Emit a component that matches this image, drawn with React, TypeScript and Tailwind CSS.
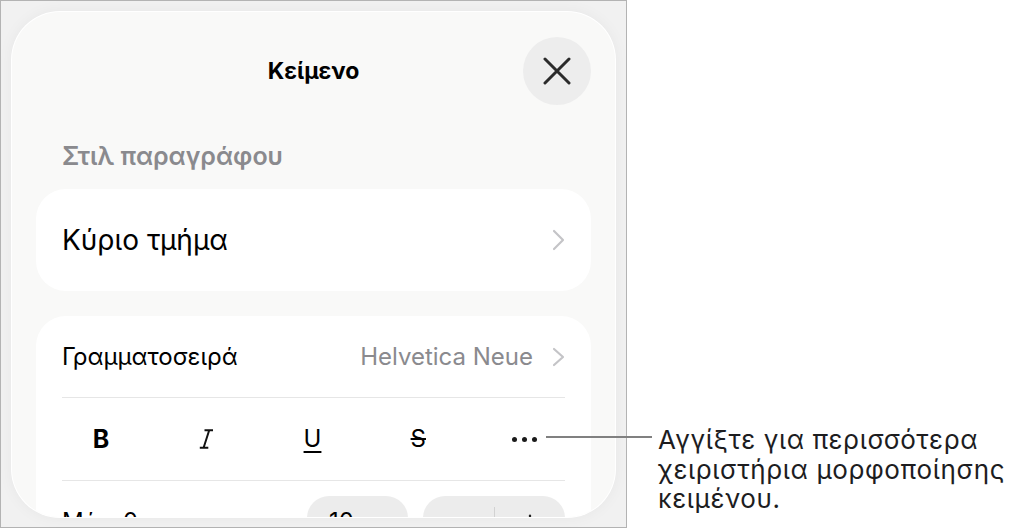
import { Minus, Plus } from "lucide-react"

const font = "font-['Inter','Noto_Sans',sans-serif]"

function Chevron({ h = 22 }: { h?: number }) {
  return (
    <svg width="13" height={h} viewBox={`0 0 13 ${h}`} fill="none" className="shrink-0">
      <polyline
        points={`2,2 11,${h / 2} 2,${h - 2}`}
        stroke="#c4c4c7"
        strokeWidth="2.2"
        strokeLinecap="round"
        strokeLinejoin="round"
      />
    </svg>
  )
}

function CloseButton() {
  return (
    <button className="w-[68px] h-[68px] rounded-full bg-[#ededed] flex items-center justify-center">
      <svg width="28" height="28" viewBox="0 0 28 28" fill="none">
        <path d="M2 2L26 26M26 2L2 26" stroke="#2b2b2b" strokeWidth="3" strokeLinecap="round" />
      </svg>
    </button>
  )
}

function StyleToolbar() {
  return (
    <div className="grid grid-cols-5 h-[82px] pl-[12px] pr-[14px] items-center text-black">
      <div className="flex justify-center">
        <span className="text-[25px] font-bold leading-none">B</span>
      </div>
      <div className="flex justify-center">
        <svg width="15" height="20" viewBox="0 0 15 20" fill="none">
          <path d="M5.5 1.2H14M0.8 18.8H9.3M10.2 1.2L4.6 18.8" stroke="#111" strokeWidth="2" />
        </svg>
      </div>
      <div className="flex justify-center">
        <span className="text-[24px] leading-none underline decoration-[1.8px] underline-offset-[4px]">U</span>
      </div>
      <div className="flex justify-center">
        <span className="text-[24px] leading-none line-through decoration-[1.8px]">S</span>
      </div>
      <div className="flex justify-center gap-[5px]">
        <span className="w-[5px] h-[5px] rounded-full bg-[#1b1b1b]" />
        <span className="w-[5px] h-[5px] rounded-full bg-[#1b1b1b]" />
        <span className="w-[5px] h-[5px] rounded-full bg-[#1b1b1b]" />
      </div>
    </div>
  )
}

function TextPanel() {
  return (
    <div className="h-full rounded-[48px] bg-[#f9f9f8] overflow-hidden ring-1 ring-white shadow-[0_0_16px_rgba(0,0,0,0.05)] px-[24px]">
      {/* header */}
      <div className="grid grid-cols-[68px_1fr_68px] items-center mt-[25px] h-[68px]">
        <div />
        <h1 className="text-center text-[23px] font-bold text-black">Κείμενο</h1>
        <CloseButton />
      </div>

      <h2 className="mt-[36px] pl-[26px] text-[25px] leading-[30px] font-semibold text-[#8a8a8e]">
        Στιλ παραγράφου
      </h2>

      <div className="mt-[18px] h-[102px] rounded-[30px] bg-white flex items-center justify-between px-[26px]">
        <span className="text-[28px] text-black">Κύριο τμήμα</span>
        <Chevron />
      </div>

      <div className="mt-[25px] rounded-[30px] bg-white">
        <div className="h-[81px] flex items-center justify-between px-[26px]">
          <span className="text-[24px] text-black">Γραμματοσειρά</span>
          <div className="flex items-center gap-[19px]">
            <span className="text-[24px] text-[#8a8a8e]">Helvetica Neue</span>
            <Chevron h={20} />
          </div>
        </div>
        <div className="mx-[26px] h-px bg-[#e6e6e6]" />
        <StyleToolbar />
        <div className="mx-[26px] h-px bg-[#e6e6e6]" />
        <div className="h-[82px] flex items-center pl-[26px] pr-[26px]">
          <span className="text-[24px] text-black flex-1">Μέγεθος</span>
          <div className="w-[101px] h-[52px] rounded-[22px] bg-[#ececec] flex items-center justify-center text-[24px] text-black">
            10 πτ
          </div>
          <div className="ml-[15px] w-[142px] h-[52px] rounded-[22px] bg-[#ececec] flex items-center">
            <div className="flex-1 flex justify-center">
              <Minus size={22} strokeWidth={2.4} className="text-[#222]" />
            </div>
            <div className="w-px h-[30px] bg-[#d2d2d2]" />
            <div className="flex-1 flex justify-center">
              <Plus size={22} strokeWidth={2.4} className="text-[#222]" />
            </div>
          </div>
        </div>
      </div>
    </div>
  )
}

export default function App() {
  return (
    <div className={`relative flex w-[1029px] h-[532px] bg-white ${font}`}>
      <div className="w-[627px] h-[528px] shrink-0 border border-[#b3b3b3] bg-[#f1f1f1] pt-[11px] px-[11px] pb-[10px]">
        <TextPanel />
      </div>

      <p className="ml-[31px] mt-[425px] text-[26px] leading-[29.5px] tracking-[0.6px] text-[#1d1d1f] whitespace-nowrap">
        Αγγίξτε για περισσότερα
        <br />
        χειριστήρια μορφοποίησης
        <br />
        κειμένου.
      </p>

      {/* leader line from the "more" button to the note */}
      <div className="absolute left-[546px] top-[436px] w-[106px] h-[2px] bg-[#808080]" />
    </div>
  )
}
